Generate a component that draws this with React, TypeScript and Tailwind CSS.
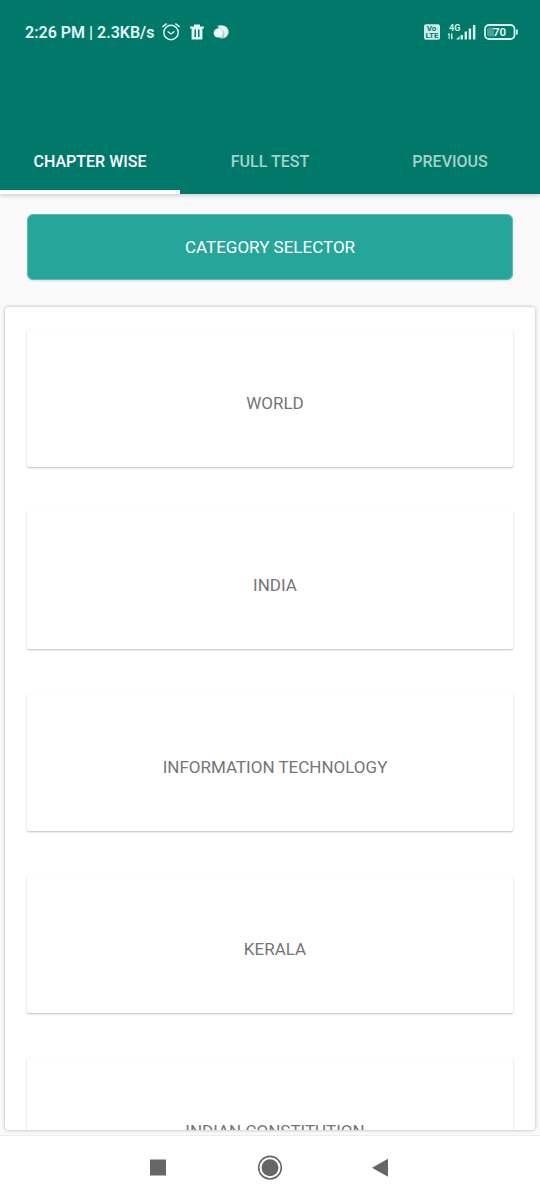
import { useState } from "react";

const tabs = ["CHAPTER WISE", "FULL TEST", "PREVIOUS"];
const categories = ["WORLD", "INDIA", "INFORMATION TECHNOLOGY", "KERALA", "INDIAN CONSTITUTION"];

function AlarmIcon() {
  return (
    <svg className="h-5 w-5" viewBox="0 0 20 20" fill="none" stroke="currentColor" strokeWidth="1.4" strokeLinecap="round" aria-hidden="true">
      <circle cx="10" cy="10.5" r="7.2" />
      <path d="M7 9.8 10 12l3-2.2" />
      <path d="M1.8 4.6 5.3 1.9M18.2 4.6l-3.5-2.7" />
    </svg>
  );
}

function TrashIcon() {
  return (
    <svg className="h-4 w-4" viewBox="0 0 16 16" fill="currentColor" aria-hidden="true">
      <path d="M5 0.4h6v2h3.900v2.200H1.100V2.400H5z" />
      <path fillRule="evenodd" d="M2.600 4h10.800v11.600H2.600zM5.500 5.600v7.400H7V5.600zM9 5.600v7.400h1.500V5.600z" />
    </svg>
  );
}

function CirclesIcon() {
  return (
    <svg className="h-4 w-4" viewBox="0 0 16 16" aria-hidden="true">
      <path d="M4.500 1.500h4.800a6.500 6.500 0 0 1 0 13H7z" fill="#a5d3cb" />
      <path d="M6 1.500h3.500a6.300 6.300 0 0 1 1 12.200c2-4 1-8-4.500-9.700z" fill="#e3f6f2" />
      <circle cx="5.200" cy="9" r="4.600" fill="#effaf6" />
    </svg>
  );
}

function VolteIcon() {
  return (
    <svg className="h-4 w-4" viewBox="0 0 16 16" role="img" aria-label="VoLTE">
      <rect width="16" height="15.500" y="0.300" rx="2" fill="#cdebe5" />
      <g fill="#00796b" fontFamily="Roboto, sans-serif" fontWeight="700" textAnchor="middle">
        <text x="7.500" y="7.300" fontSize="8">Vo</text>
        <text x="8" y="14.300" fontSize="8">LTE</text>
      </g>
    </svg>
  );
}

function SignalIcon() {
  return (
    <svg className="h-[18px] w-[30px]" viewBox="0 0 30 18" fill="#d5efea" role="img" aria-label="4G signal">
      <text x="2" y="7.500" fontSize="9" fontWeight="700" fontFamily="Roboto, sans-serif">4G</text>
      <path d="M1.200 10.500h1.500V16H1.600v-4H.6zM4 10.500h1.400V14.500h1L4.700 16.500 4 15.800zM9 16.500l3.500-3.500v3.500zM13.600 12h2.400v4.500h-2.400zM17.600 8.500H20v8h-2.400zM21.700 5.500h2.400v11h-2.400zM25.900 2h2.500v14.500h-2.500z" />
    </svg>
  );
}

function BatteryIcon() {
  return (
    <svg className="h-4 w-[34px]" viewBox="0 0 34 16" role="img" aria-label="Battery 70 percent">
      <rect x="1" y="1" width="29.500" height="14" rx="4" fill="none" stroke="#d5efea" strokeWidth="1.800" />
      <path d="M5 3.500h5v9H5A2 2 0 0 1 3 10.500v-5a2 2 0 0 1 2-2z" fill="#4ba092" />
      <path d="M32 5.500h1.800v5H32z" fill="#d5efea" />
      <text x="15.500" y="12" fontSize="11.500" fontWeight="600" fontFamily="Roboto, sans-serif" textAnchor="middle" fill="#eafaf6">70</text>
    </svg>
  );
}

export default function App() {
  const [active, setActive] = useState(0);

  return (
    <div className="flex h-dvh flex-col bg-[#fafafa] font-['Roboto','Noto_Sans',sans-serif]">
      <header className="relative z-10 bg-[#00796b] shadow-[0_2px_4px_rgba(0,0,0,0.16)]">
        <div className="flex h-16 items-center justify-between pr-[22px] pl-[25px] text-[#e3f6f2]">
          <div className="flex items-center">
            <span className="pt-0.5 text-base font-semibold whitespace-nowrap">2:26 PM | 2.3KB/s</span>
            <span className="ml-[7px] flex items-center gap-2">
              <AlarmIcon />
              <TrashIcon />
              <CirclesIcon />
            </span>
          </div>
          <div className="flex items-center gap-[7px]">
            <VolteIcon />
            <SignalIcon />
            <BatteryIcon />
          </div>
        </div>
        <nav className="mt-16 grid h-[66px] grid-cols-3" role="tablist">
          {tabs.map((tab, i) => (
            <button
              key={tab}
              type="button"
              role="tab"
              aria-selected={active === i}
              onClick={() => setActive(i)}
              className={
                active === i
                  ? "border-b-4 border-white pt-1.5 text-base font-medium text-white"
                  : "border-b-4 border-transparent pt-1.5 text-base font-medium text-[#a6d0ca]"
              }
            >
              {tab}
            </button>
          ))}
        </nav>
      </header>

      <div className="px-[27px] pt-5 pb-[27px]">
        <button
          type="button"
          className="h-[66px] w-full rounded-md border border-[#5fbcb2] bg-[#26a69a] pt-0.5 text-[17px] text-white shadow-[0_1px_2px_rgba(0,0,0,0.12)]"
        >
          CATEGORY SELECTOR
        </button>
      </div>

      <main className="mx-[5px] mb-[5px] min-h-0 flex-1 overflow-y-auto rounded-sm bg-white px-[22px] pt-[22px] shadow-[0_0_3px_1px_rgba(0,0,0,0.18)] [scrollbar-width:none]">
        <div className="flex flex-col gap-11">
          {categories.map((name) => (
            <button
              key={name}
              type="button"
              className="h-[138px] w-full shrink-0 rounded-xs bg-white pt-3 pl-[10px] text-[17px] text-[#757575] shadow-[0_1px_2px_rgba(0,0,0,0.26)]"
            >
              {name}
            </button>
          ))}
        </div>
      </main>

      <nav className="flex h-[65px] shrink-0 items-center justify-center gap-[86px] border-t border-[#ececec] bg-white text-[#666666]">
        <button type="button" aria-label="Recent apps">
          <svg className="h-[26px] w-[26px]" viewBox="0 0 26 26" fill="currentColor">
            <path d="M5 4.500h16v16H5z" />
          </svg>
        </button>
        <button type="button" aria-label="Home">
          <svg className="h-[26px] w-[26px]" viewBox="0 0 26 26">
            <circle cx="13" cy="12.700" r="11.300" fill="none" stroke="currentColor" strokeWidth="1.600" />
            <circle cx="13" cy="12.700" r="8.500" fill="currentColor" />
          </svg>
        </button>
        <button type="button" aria-label="Back">
          <svg className="h-[26px] w-[26px]" viewBox="0 0 26 26" fill="currentColor">
            <path d="M3 12.800 19 3.800v18z" />
          </svg>
        </button>
      </nav>
    </div>
  );
}
